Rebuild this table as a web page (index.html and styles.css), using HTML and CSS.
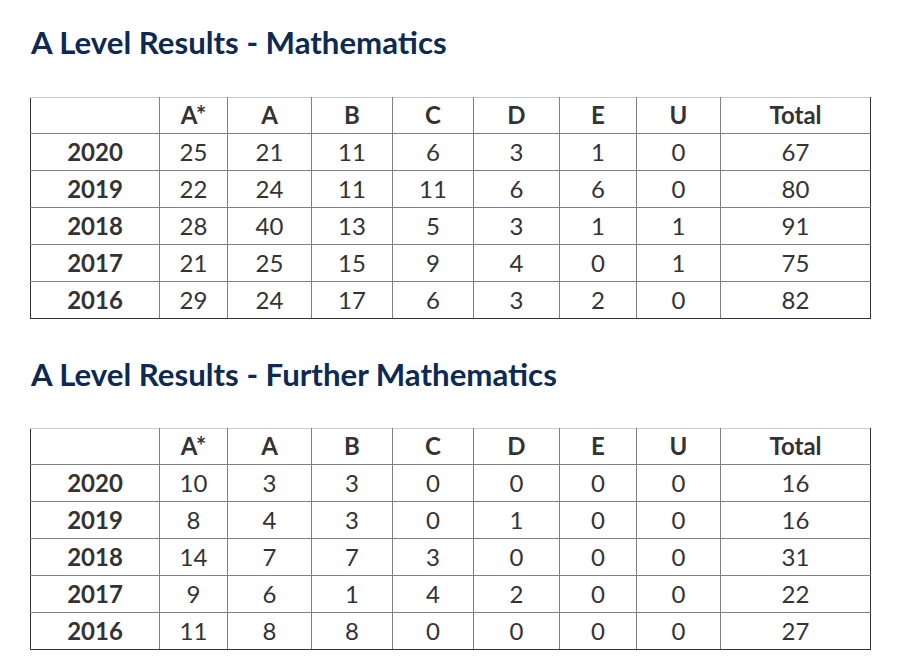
FILE: index.html
```html
<!DOCTYPE html>
<html>
<head>
<meta charset="utf-8">
<link rel="stylesheet" href="styles.css">
</head>
<body>
<div class="page">
  <h2 class="title">A Level Results - Mathematics</h2>
  <table class="results">
    <colgroup>
      <col class="c-year"><col class="c-astar"><col class="c-a"><col class="c-b"><col class="c-c"><col class="c-d"><col class="c-e"><col class="c-u"><col class="c-total">
    </colgroup>
    <thead>
      <tr><th></th><th>A*</th><th>A</th><th>B</th><th>C</th><th>D</th><th>E</th><th>U</th><th>Total</th></tr>
    </thead>
    <tbody>
      <tr><th>2020</th><td>25</td><td>21</td><td>11</td><td>6</td><td>3</td><td>1</td><td>0</td><td>67</td></tr>
      <tr><th>2019</th><td>22</td><td>24</td><td>11</td><td>11</td><td>6</td><td>6</td><td>0</td><td>80</td></tr>
      <tr><th>2018</th><td>28</td><td>40</td><td>13</td><td>5</td><td>3</td><td>1</td><td>1</td><td>91</td></tr>
      <tr><th>2017</th><td>21</td><td>25</td><td>15</td><td>9</td><td>4</td><td>0</td><td>1</td><td>75</td></tr>
      <tr><th>2016</th><td>29</td><td>24</td><td>17</td><td>6</td><td>3</td><td>2</td><td>0</td><td>82</td></tr>
    </tbody>
  </table>

  <h2 class="title second">A Level Results - Further Mathematics</h2>
  <table class="results">
    <colgroup>
      <col class="c-year"><col class="c-astar"><col class="c-a"><col class="c-b"><col class="c-c"><col class="c-d"><col class="c-e"><col class="c-u"><col class="c-total">
    </colgroup>
    <thead>
      <tr><th></th><th>A*</th><th>A</th><th>B</th><th>C</th><th>D</th><th>E</th><th>U</th><th>Total</th></tr>
    </thead>
    <tbody>
      <tr><th>2020</th><td>10</td><td>3</td><td>3</td><td>0</td><td>0</td><td>0</td><td>0</td><td>16</td></tr>
      <tr><th>2019</th><td>8</td><td>4</td><td>3</td><td>0</td><td>1</td><td>0</td><td>0</td><td>16</td></tr>
      <tr><th>2018</th><td>14</td><td>7</td><td>7</td><td>3</td><td>0</td><td>0</td><td>0</td><td>31</td></tr>
      <tr><th>2017</th><td>9</td><td>6</td><td>1</td><td>4</td><td>2</td><td>0</td><td>0</td><td>22</td></tr>
      <tr><th>2016</th><td>11</td><td>8</td><td>8</td><td>0</td><td>0</td><td>0</td><td>0</td><td>27</td></tr>
    </tbody>
  </table>
</div>
</body>
</html>
```

FILE: styles.css
```css
html, body {
  margin: 0;
  padding: 0;
  background: #ffffff;
}

.page {
  padding: 24px 0 0 30px;
  font-family: Lato, "Open Sans", sans-serif;
  color: #333333;
}

.title {
  margin: 0 0 36px 1px;
  font-size: 31.2px;
  line-height: 37px;
  font-weight: 700;
  color: #0c2a52;
}

.title.second {
  margin-top: 37px;
  margin-bottom: 35px;
}

.results {
  border-collapse: collapse;
  table-layout: fixed;
  width: 841px;
  border-left: 1px solid #333333;
  border-right: 1px solid #333333;
  border-bottom: 1px solid #333333;
  border-top: 1px solid #cccccc;
  font-size: 24px;
}

.results th,
.results td {
  border: 1px solid #808080;
  height: 36px;
  padding: 0;
  text-align: center;
  vertical-align: middle;
  line-height: 28px;
  color: #333333;
}

.results th {
  font-weight: 700;
}

.results td {
  font-weight: 400;
}

.results thead tr:first-child th {
  border-top: 1px solid #cccccc;
  height: 33px;
  padding-bottom: 2px;
}

.results tbody tr:last-child th,
.results tbody tr:last-child td {
  border-bottom: 1px solid #333333;
}

.results tr > :first-child {
  border-left: 1px solid #333333;
}

.results tr > :last-child {
  border-right: 1px solid #333333;
}

.c-year { width: 129px; }
.c-astar { width: 68px; }
.c-a { width: 84px; }
.c-b { width: 81px; }
.c-c { width: 81px; }
.c-d { width: 86px; }
.c-e { width: 77px; }
.c-u { width: 84px; }
.c-total { width: 150px; }
```
